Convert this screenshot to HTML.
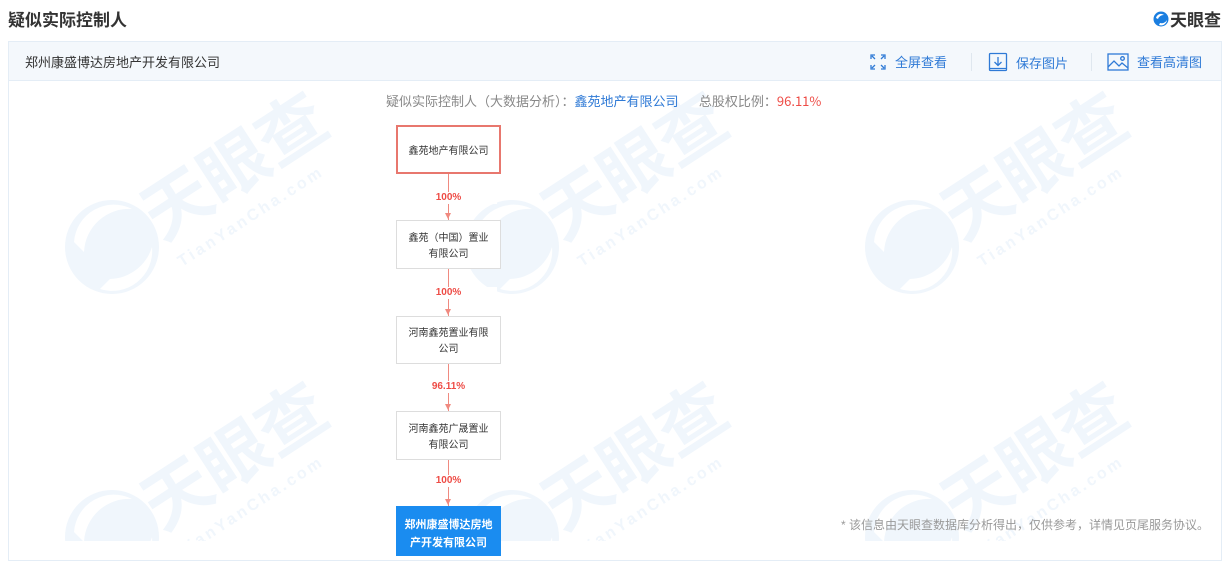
<!DOCTYPE html>
<html><head><meta charset="utf-8"><style>
*{margin:0;padding:0;box-sizing:border-box}
body{width:1231px;height:541px;overflow:hidden;background:#fff;font-family:"Liberation Sans","Noto Sans CJK SC",sans-serif;position:relative}
.title{position:absolute;left:8px;top:6px;font-size:17px;font-weight:bold;color:#333}
.logo{position:absolute;right:10px;top:6px;font-size:17px;font-weight:bold;color:#333;display:flex;align-items:center;gap:1px}
.panel{position:absolute;left:8px;top:41px;width:1214px;height:520px;border:1px solid #e4edf6}
.head{height:39px;background:#f4f8fc;border-bottom:1px solid #e4edf6;position:relative}
.head .n{position:absolute;left:16px;top:10px;font-size:13px;color:#333}
.act{position:absolute;top:10px;font-size:13px;color:#2f7ad6;display:flex;align-items:center;gap:8px}
.sep{position:absolute;top:11px;width:1px;height:18px;background:#dfe7ef}
.wm{position:absolute;left:0;top:0}
.sum{position:absolute;top:91px;left:386px;font-size:13px;color:#888;white-space:nowrap;font-family:"Noto Sans CJK SC",sans-serif}
.box{position:absolute;left:396px;width:105px;border:1px solid #ddd;background:#fff;font-size:10px;color:#333;text-align:center;display:flex;align-items:center;justify-content:center;line-height:16px;white-space:nowrap;font-family:"Noto Sans CJK SC",sans-serif}
.line{position:absolute;left:448px;width:1px;background:#f08a80}
.arr{position:absolute;left:445px;width:0;height:0;border-left:3.5px solid transparent;border-right:3.5px solid transparent;border-top:6px solid #f08a80}
.pct{position:absolute;left:400px;width:97px;text-align:center;font-size:10px;font-weight:bold;color:#ee4c46;background:#fff;line-height:12px}
.note{position:absolute;right:22px;top:516px;font-size:12px;color:#999}
</style></head><body>
<svg class="wm" width="1231" height="541">
<defs>
<g id="w" fill="#f0f6fc">
<circle cx="0" cy="0" r="47"/>
<path d="M-38 -5 A40 40 0 0 1 20 -38 A45 45 0 0 0 -28 5Z" fill="#fff"/>
<path d="M-12 42 A40 40 0 0 0 40 0 A45 45 0 0 1 -2 32Z" fill="#fff"/>
<text x="50" y="-5" font-size="68" font-family="Noto Sans CJK SC,sans-serif" font-weight="bold" transform="rotate(-33 50 -5)">天眼查</text>
<text x="70" y="20" font-size="16" font-family="Liberation Sans,sans-serif" font-weight="bold" letter-spacing="3" transform="rotate(-33 70 20)">TianYanCha.com</text>
</g></defs>
<use href="#w" x="112" y="247"/><use href="#w" x="512" y="247"/><use href="#w" x="912" y="247"/>
<use href="#w" x="112" y="537"/><use href="#w" x="512" y="537"/><use href="#w" x="912" y="537"/>
</svg>
<div class="title">疑似实际控制人</div>
<div class="logo"><svg width="16" height="16" viewBox="0 0 16 16"><circle cx="8" cy="8" r="7.5" fill="#1a7ee0"/><path d="M3 7 A5 5 0 0 1 11 4 A6 6 0 0 0 5 8Z" fill="#fff"/><path d="M6 14 A6 6 0 0 0 14 9 A6 6 0 0 1 7 12Z" fill="#fff"/></svg>天眼查</div>
<div class="panel">
<div class="head"><span class="n">郑州康盛博达房地产开发有限公司</span>
<div class="act" style="left:860px"><svg width="18" height="18" viewBox="0 0 18 18" fill="none" stroke="#2f7ad6" stroke-width="1.3"><path d="M2 6V2h4M3 3l3 3M12 2h4v4M15 3l-3 3M2 12v4h4M3 15l3-3M16 12v4h-4M15 15l-3-3"/></svg>全屏查看</div>
<div class="sep" style="left:962px"></div>
<div class="act" style="left:979px"><svg width="20" height="20" viewBox="0 0 20 20" fill="none" stroke="#2f7ad6" stroke-width="1.3"><rect x="1.5" y="1.5" width="17" height="17" rx="1"/><path d="M10 5v8M6.5 10l3.5 3.5 3.5-3.5M1.5 16.5h17"/></svg>保存图片</div>
<div class="sep" style="left:1082px"></div>
<div class="act" style="left:1098px"><svg width="22" height="18" viewBox="0 0 22 18" fill="none" stroke="#2f7ad6" stroke-width="1.3"><rect x="1" y="1" width="20" height="16"/><path d="M1 14l6-6 5 5 3-3 6 5"/><circle cx="15.5" cy="5.5" r="1.8"/></svg>查看高清图</div>
</div></div>
<div class="sum">疑似实际控制人（大数据分析）：<span style="color:#2f7ad6">鑫苑地产有限公司</span>&nbsp;&nbsp;&nbsp;&nbsp;&nbsp;&nbsp;&nbsp;总股权比例：<span style="color:#ee4c46">96.11%</span></div>

<div class="box" style="top:125px;height:49px;border:2px solid #e8776e">鑫苑地产有限公司</div>
<div class="line" style="top:174px;height:46px"></div><div class="arr" style="top:213px"></div><div class="pct" style="top:192px">100%</div>
<div class="box" style="top:220px;height:49px">鑫苑（中国）置业<br>有限公司</div>
<div class="line" style="top:269px;height:47px"></div><div class="arr" style="top:309px"></div><div class="pct" style="top:287px">100%</div>
<div class="box" style="top:316px;height:48px">河南鑫苑置业有限<br>公司</div>
<div class="line" style="top:364px;height:47px"></div><div class="arr" style="top:404px"></div><div class="pct" style="top:381px">96.11%</div>
<div class="box" style="top:411px;height:49px">河南鑫苑广晟置业<br>有限公司</div>
<div class="line" style="top:460px;height:46px"></div><div class="arr" style="top:499px"></div><div class="pct" style="top:475px">100%</div>
<div class="box" style="top:506px;height:50px;background:#1a8cf0;border-color:#1a8cf0;color:#fff;font-weight:bold;align-items:flex-start;padding-top:8px;font-size:11px;line-height:18px">郑州康盛博达房地<br>产开发有限公司</div>
<div class="note">* 该信息由天眼查数据库分析得出，仅供参考，详情见页尾服务协议。</div>
</body></html>
